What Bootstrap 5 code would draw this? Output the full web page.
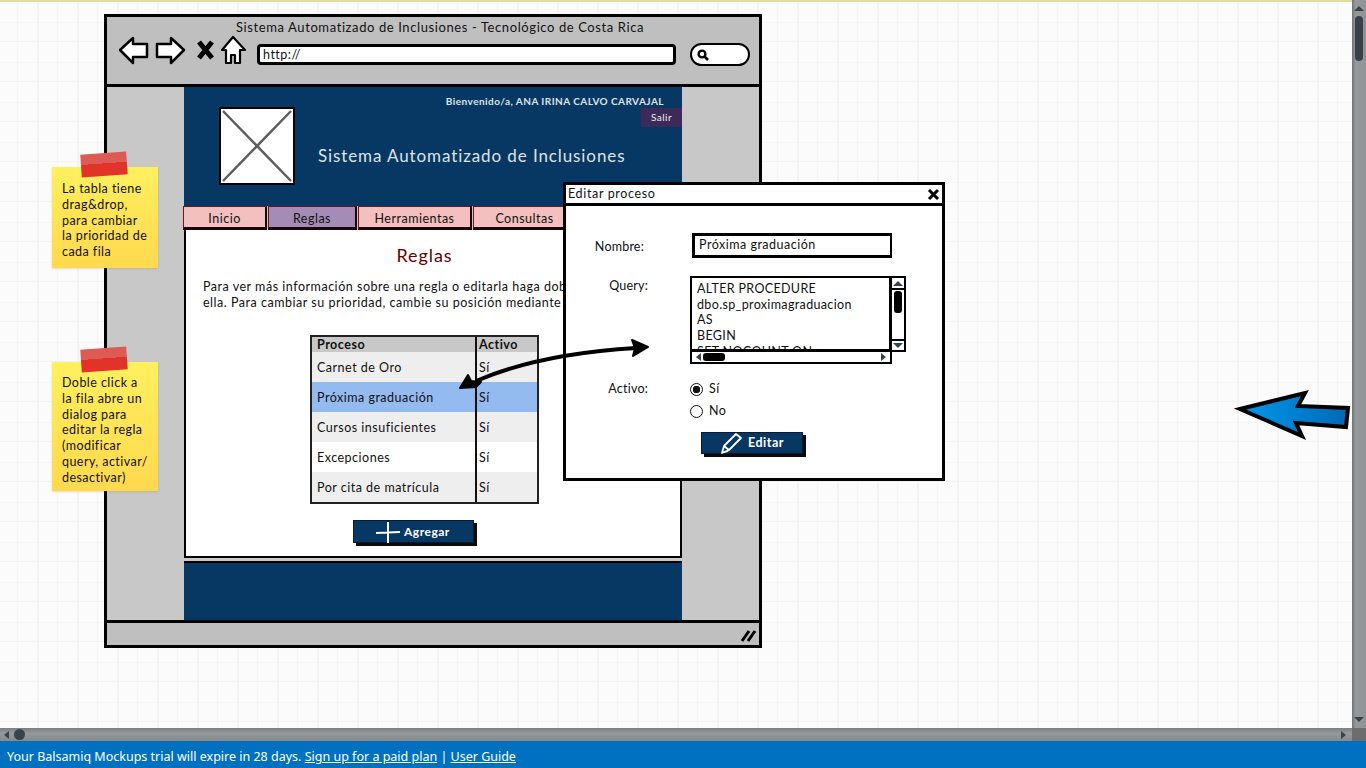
<!DOCTYPE html>
<html lang="es"><head><meta charset="utf-8"><title>Balsamiq</title>
<link href="https://cdn.jsdelivr.net/npm/bootstrap@5.3.0/dist/css/bootstrap.min.css" rel="stylesheet">
<style>
html,body{height:100%;overflow:hidden}
body{font-family:Lato,"Noto Sans",sans-serif;font-size:13px;letter-spacing:.5px;color:#111;background:#fbfbfb}
.stage{height:100vh}
.canvas{height:728px;background-color:#fbfbfb;background-image:
 linear-gradient(90deg,transparent 37px,#f3f3f3 37px,#f3f3f3 39px,transparent 39px),
 linear-gradient(90deg,transparent 17px,#f5f5f5 17px,#f5f5f5 18px,transparent 18px),
 linear-gradient(transparent 39px,#f3f3f3 39px,#f3f3f3 41px,transparent 41px),
 linear-gradient(transparent 20px,#f5f5f5 20px,#f5f5f5 21px,transparent 21px);
 background-size:40px 40px;border-top:2px solid #e3dba3;overflow:hidden}
.vbar{width:14px;background:linear-gradient(90deg,#6f7375,#95999b 25%,#8f9395);height:728px}
.thumb-v{width:8px;height:45px;border-radius:4px;background:#394249;margin:5px 0 0 3px}
.hbar{height:13px;background:linear-gradient(#7b7f81,#969a9c 40%,#86898b)}
.thumb-h{width:11px;height:11px;border-radius:50%;background:#394249}
.tri{width:0;height:0;border-style:solid;border-color:transparent}
.tri-up{border-width:0 5px 5px;border-bottom-color:#394249}
.tri-down{border-width:5px 5px 0;border-top-color:#394249}
.tri-left{border-width:4px 5px 4px 0;border-right-color:#394249}
.tri-right{border-width:4px 0 4px 5px;border-left-color:#394249}
.corner{width:14px;background:#6d6d6d}
.trial{height:27px;background:#0070c0;color:#fff;padding-left:7px;font-size:12.5px;letter-spacing:0;line-height:31px;font-family:"Noto Sans",sans-serif}
.trial a{color:#fff}
.mock{position:absolute;left:104px;top:12px;width:658px;height:634px;border:3px solid #000;background:#c8c8c8}
.toolbar{height:71px;background:#bfbfbf;border-bottom:3px solid #000;padding:1px 0 0 12px}
.win-title{height:19px;line-height:19px;padding-left:117px;white-space:nowrap;font-size:13px;letter-spacing:.6px}
.nav-row{height:30px;margin-top:1px}
.nav-icons{margin-top:-3px}
.url{width:419px;height:21px;margin:6px 0 0 8px;background:#fff;border:3px solid #000;border-radius:4px;font-size:12.5px;line-height:15px;padding-left:3px}
.find{width:60px;height:23px;margin:5px 0 0 14px;background:#fff;border:2.5px solid #000;border-radius:12px}
.side{width:77px}
.midcol{width:498px}
.topband{height:119px;background:#073763;color:#dfe3e8}
.welcome{position:absolute;right:18px;top:7px;font-size:10px;font-weight:700;letter-spacing:.45px;white-space:nowrap}
.logout{position:absolute;right:0;top:21px;width:41px;height:19px;background:#3d2a58;color:#eee;font-size:10px;line-height:19px;text-align:center}
.logo-box{width:76px;height:78px;border:2px solid #000;background:#fff;margin-left:35px;margin-top:20px}
.sys-title{font-size:17px;letter-spacing:.9px;margin-left:23px;margin-top:58px;white-space:nowrap;line-height:22px}
.tabbar{height:24px;margin-left:-1px;gap:1px}
.tabx{height:24px;background:#f3bfbf;border:1px solid #73141c;border-bottom:3px solid #1a0508;border-right:2px solid #1a0508;text-align:center;line-height:24px;font-size:12.5px;white-space:nowrap}
.tab-a{width:84px}
.tab-b{width:89px;background:#a58cb6}
.tab-c{width:114px}
.tab-d{width:104px}
.sheet{height:328px;background:#fff;border:2px solid #000;border-top:0;padding:14px 17px 0}
.rules-h{color:#660000;font-size:18px;text-align:center;line-height:22px;margin-bottom:13px;letter-spacing:.9px;padding-right:17px}
.rules-p{font-size:12.5px;line-height:16px;white-space:nowrap;margin:0;letter-spacing:.52px}
.rule-table{width:229px;margin:24px 0 0 107px;border:2.5px solid #222;border-collapse:separate;border-spacing:0;table-layout:fixed;font-size:12.5px}
.col-proc{width:163px}
.rule-table td,.rule-table th{padding:0 5px;border:0;height:30px;vertical-align:middle;line-height:14px;background:#fff}
.rule-table td{padding-top:2px}
.rule-table th{height:15px;background:#c8c8c8;font-size:12.5px;font-weight:700}
.rule-table td:last-child,.rule-table th:last-child{border-left:2px solid #111;padding-left:2px}
.rule-table tr.shade td{background:#eeeeee}
.rule-table tr.pick td{background:#93bbf0}
.navy-btn{background:#073763;color:#fff;font-weight:700;font-size:12px;border:1px solid #0a1a2c;box-shadow:3px 3px 0 #0b0b0b;white-space:nowrap}
.add-btn{width:121px;height:23px;margin:16px 0 0 150px;padding-left:22px}
.footband{height:59px;margin-top:3px;background:#073763;border-top:2px solid #000}
.statusbar{height:25px;background:#bfbfbf;border-top:3px solid #000;padding:5px 1px 0 0}
.sticky{position:absolute;left:52px;width:106px;background:linear-gradient(#fff060,#ffe555 45%,#ffd94e);padding:14px 0 0 10px;font-size:12.5px;line-height:15.8px;letter-spacing:.45px;color:#111;white-space:nowrap;box-shadow:0 1px 2px rgba(150,130,0,.25)}
.tape{position:absolute;left:29px;top:-14px;width:46px;height:23px;background:linear-gradient(#dd5a55 45%,#e13327 45%);transform:rotate(-4deg)}
.note-a{top:165px;height:101px}
.note-b{top:360px;height:129px;padding-top:13px}
.dialog{position:absolute;left:563px;top:180px;width:382px;height:299px;border:3px solid #000;background:#fff;z-index:2}
.dlg-head{height:21px;border-bottom:3px solid #000;padding:0 2px 0 2px;font-size:12.5px;line-height:18px;letter-spacing:.65px}
.dlg-row{display:grid;grid-template-columns:82px 1fr;column-gap:44px}
.row-name{padding-top:27px}
.row-query{margin-top:16px}
.row-active{margin-top:14px}
.lbl{text-align:right;font-size:12.5px;letter-spacing:.2px}
.lbl-name{line-height:27px;padding-right:4px}
.lbl-query{line-height:20px}
.lbl-active{line-height:22px}
.name-input{width:200px;height:25px;border:3px solid #000;border-right-width:2px;padding:0 4px;line-height:17px;font-size:12.5px}
.sql-wrap{width:216px;height:88px;margin-left:-2px}
.sql{position:absolute;left:0;top:0;width:201px;height:75px;border:2.5px solid #000;border-bottom-width:2px;padding:3px 5px 0;font-size:12.5px;line-height:15.7px;letter-spacing:.35px;overflow:hidden;white-space:nowrap;background:#fff}
.sb-v{position:absolute;left:201px;top:0;width:15px;height:76px;border:2px solid #000;border-left-width:1px;background:#fff}
.sb-h{position:absolute;left:0;top:74px;width:202px;height:14px;border:2px solid #000;background:#fff}
.sb-cell{height:12px;border-bottom:2px solid #000}
.sb-cell-end{height:11px;border-top:2px solid #000}
.knob-v{width:8px;height:22px;margin:1px 0 0 2px;background:#000;border-radius:3px}
.knob-h{position:absolute;left:11px;top:1px;width:22px;height:8px;background:#000;border-radius:3px}
.radio-dot{width:13px;height:13px;border:1.5px solid #111;border-radius:50%;background:#fff}
.radio-on{background:radial-gradient(circle,#111 3.5px,#fff 4px)}
.radio-line{height:22px;font-size:12.5px;gap:6px;margin-left:-2px}
.edit-btn{width:102px;height:22px;margin:10px 0 0 9px;padding-left:18px;font-size:12.5px}
.overlay{position:absolute;left:0;top:0;z-index:3;pointer-events:none}
.arrow-top{margin-top:6px}
.arrow-bot{margin-bottom:6px}
.hthumb{margin-left:5px}
.hend{margin-right:6px}
</style></head>
<body>
<div class="stage d-flex flex-column">
 <div class="d-flex">
  <div class="canvas flex-grow-1 position-relative">
   <div class="mock d-flex flex-column">
    <div class="toolbar">
     <div class="win-title">Sistema Automatizado de Inclusiones - Tecnológico de Costa Rica</div>
     <div class="nav-row d-flex align-items-start">
      <svg class="nav-icons" width="130" height="30" viewBox="0 0 130 30">
       <path d="M1 15 L14 3 L14 9 L28 9 L28 22 L14 22 L14 28 Z" fill="#fff" stroke="#000" stroke-width="2.5" stroke-linejoin="round"/>
       <path d="M65 15 L52 3 L52 9 L38 9 L38 22 L52 22 L52 28 Z" fill="#fff" stroke="#000" stroke-width="2.5" stroke-linejoin="round"/>
       <path d="M80 7 L93 23 M93 7 L80 23" stroke="#000" stroke-width="5" fill="none"/>
       <path d="M114 2 L126 15 L121 15 L121 28 L116 28 L116 20 L112 20 L112 28 L107 28 L107 15 L103 15 Z" fill="#fff" stroke="#000" stroke-width="2.2" stroke-linejoin="round"/>
      </svg>
      <div class="url">http://</div>
      <div class="find d-flex align-items-center ps-1">
       <svg width="14" height="14" viewBox="0 0 14 14"><circle cx="6" cy="6" r="3.4" fill="none" stroke="#000" stroke-width="2.4"/><path d="M8.5 8.5 L12 12" stroke="#000" stroke-width="2.6"/></svg>
      </div>
     </div>
    </div>
    <div class="d-flex flex-grow-1">
     <div class="side"></div>
     <div class="midcol">
      <div class="topband position-relative d-flex">
       <div class="welcome">Bienvenido/a, ANA IRINA CALVO CARVAJAL</div>
       <div class="logout">Salir</div>
       <div class="logo-box">
        <svg width="72" height="74" viewBox="0 0 72 74"><path d="M2 2 L70 72 M70 2 L2 72" stroke="#5e5e5e" stroke-width="2.5"/></svg>
       </div>
       <div class="sys-title">Sistema Automatizado de Inclusiones</div>
      </div>
      <div class="tabbar d-flex">
       <div class="tabx tab-a">Inicio</div>
       <div class="tabx tab-b">Reglas</div>
       <div class="tabx tab-c">Herramientas</div>
       <div class="tabx tab-d">Consultas</div>
      </div>
      <div class="sheet">
       <div class="rules-h">Reglas</div>
       <p class="rules-p">Para ver más información sobre una regla o editarla haga doble<br>ella. Para cambiar su prioridad, cambie su posición mediante</p>
       <table class="rule-table">
        <colgroup><col class="col-proc"><col></colgroup>
        <thead><tr><th>Proceso</th><th>Activo</th></tr></thead>
        <tbody>
         <tr class="shade"><td>Carnet de Oro</td><td>Sí</td></tr>
         <tr class="pick"><td>Próxima graduación</td><td>Sí</td></tr>
         <tr class="shade"><td>Cursos insuficientes</td><td>Sí</td></tr>
         <tr><td>Excepciones</td><td>Sí</td></tr>
         <tr class="shade"><td>Por cita de matrícula</td><td>Sí</td></tr>
        </tbody>
       </table>
       <div class="add-btn navy-btn d-flex align-items-center">
        <svg class="me-1" width="24" height="22" viewBox="0 0 24 22"><path d="M0 12 L24 11 M12 1 L12 22" stroke="#fff" stroke-width="2"/></svg>Agregar
       </div>
      </div>
      <div class="footband"></div>
     </div>
     <div class="side"></div>
    </div>
    <div class="statusbar d-flex justify-content-end">
     <svg width="18" height="14" viewBox="0 0 18 14"><path d="M2 13 L9 3 M8 13 L15 3" stroke="#000" stroke-width="3"/></svg>
    </div>
   </div>

   <div class="sticky note-a"><div class="tape"></div>La tabla tiene<br>drag&amp;drop,<br>para cambiar<br>la prioridad de<br>cada fila</div>
   <div class="sticky note-b"><div class="tape"></div>Doble click a<br>la fila abre un<br>dialog para<br>editar la regla<br>(modificar<br>query, activar/<br>desactivar)</div>

   <div class="dialog">
    <div class="dlg-head d-flex justify-content-between align-items-center">
     <span>Editar proceso</span>
     <svg width="13" height="13" viewBox="0 0 13 13"><path d="M2 2 L11 11 M11 2 L2 11" stroke="#000" stroke-width="3"/></svg>
    </div>
    <div class="dlg-row row-name">
     <div class="lbl lbl-name">Nombre:</div>
     <div class="name-input">Próxima graduación</div>
    </div>
    <div class="dlg-row row-query">
     <div class="lbl lbl-query">Query:</div>
     <div class="sql-wrap position-relative">
      <div class="sql">ALTER PROCEDURE<br>dbo.sp_proximagraduacion<br>AS<br>BEGIN<br>SET NOCOUNT ON</div>
      <div class="sb-v"><div class="sb-cell d-flex justify-content-center align-items-center"><div class="tri tri-up"></div></div><div class="knob-v"></div>
       <div class="sb-cell-end position-absolute bottom-0 start-0 end-0 d-flex justify-content-center align-items-center"><div class="tri tri-down"></div></div></div>
      <div class="sb-h d-flex justify-content-between align-items-center">
       <div class="tri tri-left ms-1"></div><div class="knob-h"></div><div class="tri tri-right me-1"></div>
      </div>
     </div>
    </div>
    <div class="dlg-row row-active">
     <div class="lbl lbl-active">Activo:</div>
     <div>
      <div class="radio-line d-flex align-items-center"><span class="radio-dot radio-on"></span>Sí</div>
      <div class="radio-line d-flex align-items-center"><span class="radio-dot"></span>No</div>
     </div>
    </div>
    <div class="dlg-row">
     <div></div>
     <div class="edit-btn navy-btn d-flex align-items-center">
      <svg class="me-1" width="24" height="24" viewBox="0 0 24 24"><path d="M2 22 L4 15 L16 3 L21 7 L9 19 Z M4 15 L9 19 M2 22 L8 20" fill="none" stroke="#fff" stroke-width="1.8" stroke-linejoin="round"/></svg>Editar
     </div>
    </div>
   </div>

   <svg class="overlay" width="1352" height="726" viewBox="0 2 1352 726">
    <defs><linearGradient id="blu" x1="0" x2="1" y1="0" y2="0"><stop offset="0" stop-color="#0098ec"/><stop offset="1" stop-color="#0069b4"/></linearGradient></defs>
    <path d="M476 381 C520 362 570 352 636 348" fill="none" stroke="#000" stroke-width="4"/>
    <path d="M648 347 L632 340 L635 348 L633 356 Z" fill="#000" stroke="#000" stroke-width="2" stroke-linejoin="round"/>
    <path d="M460 388 L468 375 L471 381 L481 382 L476 387 Z" fill="#000" stroke="#000" stroke-width="2" stroke-linejoin="round"/>
    <path d="M1240 409 L1305 393 L1298 406 L1348 408 L1346 427 L1296 423 L1302 436 Z" fill="url(#blu)" stroke="#000" stroke-width="4" stroke-linejoin="miter"/>
   </svg>
  </div>
  <div class="vbar d-flex flex-column">
   <div class="arrow-top d-flex justify-content-center"><div class="tri tri-up"></div></div>
   <div class="thumb-v"></div>
   <div class="arrow-bot d-flex justify-content-center mt-auto"><div class="tri tri-down"></div></div>
  </div>
 </div>
 <div class="d-flex">
  <div class="hbar flex-grow-1 d-flex align-items-center">
   <div class="tri tri-left ms-1"></div><div class="thumb-h hthumb"></div>
   <div class="tri tri-right ms-auto hend"></div>
  </div>
  <div class="corner"></div>
 </div>
 <div class="trial">Your Balsamiq Mockups trial will expire in 28 days. <a href="#">Sign up for a paid plan</a> | <a href="#">User Guide</a></div>
</div>
</body></html>
